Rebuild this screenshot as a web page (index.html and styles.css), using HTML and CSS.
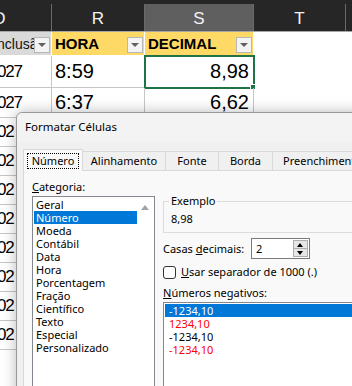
FILE: index.html
```html
<!DOCTYPE html>
<html lang="pt">
<head>
  <meta charset="UTF-8">
  <title>Formatar Células</title>
  <link rel="stylesheet" href="styles.css">
</head>
<body>
  <div class="sheet">
    <div class="heads">
      <div class="head c-d">D</div>
      <div class="head c-r">R</div>
      <div class="head c-s sel">S</div>
      <div class="head c-t">T</div>
      <div class="head c-x"></div>
    </div>

    <div class="row r1">
      <div class="cell c-d gray"><span class="clip">nclusão</span><i class="drop"></i></div>
      <div class="cell c-r yellow"><b>HORA</b><i class="drop"></i></div>
      <div class="cell c-s yellow"><b>DECIMAL</b><i class="drop"></i></div>
    </div>
    <div class="row r2">
      <div class="cell c-d"><span class="year">027</span></div>
      <div class="cell c-r">8:59</div>
      <div class="cell c-s num active">8,98<i class="handle"></i></div>
    </div>
    <div class="row r3">
      <div class="cell c-d"><span class="year">027</span></div>
      <div class="cell c-r">6:37</div>
      <div class="cell c-s num">6,62</div>
    </div>
    <div class="row"><div class="cell c-d"><span class="year">02</span></div></div>
    <div class="row"><div class="cell c-d"><span class="year">02</span></div></div>
    <div class="row"><div class="cell c-d"><span class="year">02</span></div></div>
    <div class="row"><div class="cell c-d"><span class="year">02</span></div></div>
    <div class="row"><div class="cell c-d"><span class="year">02</span></div></div>
    <div class="row"><div class="cell c-d"><span class="year">02</span></div></div>
    <div class="row"><div class="cell c-d"><span class="year">02</span></div></div>
    <div class="row"><div class="cell c-d"><span class="year">02</span></div></div>
  </div>

  <div class="dialog">
    <div class="title">Formatar Células</div>

    <div class="tabs">
      <span class="tab current"><span class="focus">Número</span></span>
      <span class="tab t-alin">Alinhamento</span>
      <span class="tab t-fonte">Fonte</span>
      <span class="tab t-borda">Borda</span>
      <span class="tab t-pre">Preenchimento</span>
    </div>

    <div class="panel">
      <div class="left">
        <div class="label"><u>C</u>ategoria:</div>
        <div class="listbox cats">
          <ul>
            <li>Geral</li>
            <li class="current">Número</li>
            <li>Moeda</li>
            <li>Contábil</li>
            <li>Data</li>
            <li>Hora</li>
            <li>Porcentagem</li>
            <li>Fração</li>
            <li>Científico</li>
            <li>Texto</li>
            <li>Especial</li>
            <li>Personalizado</li>
          </ul>
          <div class="scroll"><i class="up"></i></div>
        </div>
      </div>

      <div class="right">
        <fieldset class="sample">
          <legend>Exemplo</legend>
          <div class="value">8,98</div>
        </fieldset>

        <div class="field">
          <span class="label field-label">Casas <u>d</u>ecimais:</span>
          <div class="spin">
            <span class="spin-val">2</span>
            <div class="spin-btns">
              <span class="spin-btn"><i class="tri-up"></i></span>
              <span class="spin-btn"><i class="tri-down"></i></span>
            </div>
          </div>
        </div>

        <div class="check">
          <span class="box"></span>
          <span class="label"><u>U</u>sar separador de 1000 (.)</span>
        </div>

        <div class="label neg-label"><u>N</u>úmeros negativos:</div>
        <div class="listbox negs">
          <ul>
            <li class="current">-1234,10</li>
            <li class="red">1234,10</li>
            <li>-1234,10</li>
            <li class="red">-1234,10</li>
          </ul>
        </div>
      </div>
    </div>
  </div>
</body>
</html>
```

FILE: styles.css
```css
* {
  box-sizing: border-box;
}

body {
  margin: 0;
  width: 352px;
  height: 386px;
  overflow: hidden;
  position: relative;
  background: #fff;
  font-family: "Liberation Sans", Arial, sans-serif;
}

ul,
li {
  margin: 0;
  padding: 0;
  list-style: none;
}

/* planilha */

.heads {
  display: flex;
  height: 32px;
  padding-top: 4px;
  background: #262626;
  border-bottom: 1px solid #a6a6a6;
}

.head {
  display: flex;
  align-items: center;
  justify-content: center;
  padding-top: 2px;
  color: #f4f4f4;
  font-size: 17px;
  border-right: 1px solid #6a6a6a;
}

.head.sel {
  background: #5f5f5f;
}

.c-d {
  width: 104px;
  margin-left: -52px;
  flex: none;
}

.c-r {
  width: 93px;
  flex: none;
}

.c-s {
  width: 109px;
  flex: none;
}

.c-t {
  width: 92px;
  flex: none;
}

.c-x {
  flex: 1;
  border-right: 0;
}

.row {
  display: flex;
  height: 29px;
}

.row.r1 {
  height: 24px;
}

.row.r2 {
  height: 32px;
}

.row.r3 {
  height: 30px;
}

.cell {
  position: relative;
  display: flex;
  align-items: center;
  padding-left: 3px;
  font-size: 20px;
  color: #000;
  white-space: nowrap;
  overflow: hidden;
  border-right: 1px solid #c6c6c6;
  border-bottom: 1px solid #c6c6c6;
}

.row .c-d {
  padding-left: 52px;
}

.year {
  margin-left: -3px;
  font-size: 17px;
  letter-spacing: -1.2px;
}

.cell.gray {
  background: #d9d9d9;
  font-size: 14px;
  color: #111;
  border-right-color: #fff;
  border-bottom-color: #fff;
}

.clip {
  width: 37px;
  overflow: hidden;
  text-indent: -3px;
}

.cell.yellow {
  background: #ffd966;
  font-size: 15px;
  border-right-color: #fff;
  border-bottom-color: #fff;
}

.drop {
  position: absolute;
  right: 1px;
  top: 5px;
  width: 16px;
  height: 16px;
  background: #f3f3f3;
  border: 1px solid #b7b7b7;
}

.drop::after {
  content: "";
  position: absolute;
  left: 3px;
  top: 5px;
  border-left: 4px solid transparent;
  border-right: 4px solid transparent;
  border-top: 4px solid #606060;
}

.cell.num {
  justify-content: flex-end;
  padding-right: 4px;
}

.cell.active {
  overflow: visible;
  outline: 2px solid #217346;
  outline-offset: -1px;
}

.handle {
  position: absolute;
  right: -3px;
  bottom: -3px;
  width: 6px;
  height: 6px;
  background: #217346;
  border: 1px solid #fff;
}

/* janela */

.dialog {
  position: absolute;
  left: 16px;
  top: 112px;
  width: 400px;
  height: 300px;
  background: #f0f0f0;
  border: 1px solid #9a9a9a;
  border-radius: 6px 0 0 0;
  box-shadow: 0 0 14px rgba(0, 0, 0, 0.28);
  font-family: "Noto Sans", "Open Sans", sans-serif;
  font-size: 11px;
  color: #000;
}

.title {
  height: 29px;
  padding-left: 8px;
  line-height: 28px;
  font-size: 11.5px;
  background: #f3f3f3;
  border-radius: 6px 0 0 0;
}

.tabs {
  display: flex;
  align-items: flex-end;
  height: 28px;
  margin-left: 6px;
  padding-top: 7px;
}

.tab {
  height: 19px;
  line-height: 17px;
  text-align: center;
  background: #f0f0f0;
  border: 1px solid #d9d9d9;
  border-bottom: 0;
  margin-left: -1px;
  white-space: nowrap;
}

.tab.current {
  position: relative;
  z-index: 1;
  width: 60px;
  height: 22px;
  margin-left: 0;
  margin-bottom: -1px;
  padding-top: 2px;
  background: #f9f9f9;
}

.focus {
  display: inline-block;
  width: 52px;
  height: 16px;
  line-height: 14px;
  border: 1px dotted #000;
}

.t-alin {
  width: 84px;
}

.t-fonte {
  width: 54px;
}

.t-borda {
  width: 55px;
}

.t-pre {
  width: 90px;
  text-align: left;
  padding-left: 10px;
}

.panel {
  display: flex;
  gap: 8px;
  height: 240px;
  margin-left: 6px;
  padding: 8px 0 0 8px;
  background: #f9f9f9;
  border: 1px solid #d9d9d9;
}

.label {
  line-height: 16px;
}

.left {
  width: 123px;
}

.listbox {
  background: #fff;
  border: 1px solid #828790;
}

.cats {
  display: flex;
  height: 200px;
  margin-top: 1px;
  padding: 1px 0 0 1px;
}

.cats ul {
  flex: 1;
}

.listbox li {
  height: 13px;
  line-height: 13px;
  padding-left: 2px;
  white-space: nowrap;
}

.listbox li.current {
  background: #0078d7;
  color: #fff;
}

.scroll {
  width: 17px;
  position: relative;
}

.up {
  position: absolute;
  left: 4px;
  top: 7px;
  border-left: 4px solid transparent;
  border-right: 4px solid transparent;
  border-bottom: 5px solid #a3a3a3;
}

.right {
  flex: 1;
  padding-top: 15px;
}

.sample {
  height: 39px;
  margin: 0;
  padding: 0 5px;
  border: 1px solid #dcdcdc;
}

.sample legend {
  padding: 0 2px;
  line-height: 14px;
}

.sample .value {
  padding: 4px 0 0 2px;
  line-height: 14px;
}

.field {
  display: flex;
  align-items: center;
  margin-top: 5px;
}

.field-label {
  width: 88px;
}

.spin {
  display: flex;
  width: 59px;
  height: 21px;
  background: #fff;
  border: 1px solid #7a7a7a;
}

.spin-val {
  flex: 1;
  padding-left: 4px;
  line-height: 19px;
}

.spin-btns {
  display: flex;
  flex-direction: column;
  width: 16px;
  padding: 1px 1px 1px 0;
}

.spin-btn {
  position: relative;
  flex: 1;
  background: #e6e6e6;
  border: 1px solid #adadad;
}

.spin-btn + .spin-btn {
  border-top: 0;
}

.tri-up,
.tri-down {
  position: absolute;
  left: 3px;
  top: 2px;
  border-left: 3.5px solid transparent;
  border-right: 3.5px solid transparent;
}

.tri-up {
  border-bottom: 4px solid #000;
}

.tri-down {
  top: 2px;
  border-top: 4px solid #000;
}

.check {
  display: flex;
  align-items: center;
  gap: 5px;
  height: 14px;
  margin-top: 6px;
}

.box {
  width: 13px;
  height: 13px;
  background: #fff;
  border: 1px solid #333;
  border-radius: 3px;
}

.neg-label {
  margin-top: 7px;
  line-height: 14px;
}

.negs {
  height: 120px;
  margin-top: 2px;
  padding: 1px 0 0 1px;
}

.negs li {
  padding-left: 4px;
}

.negs li.red {
  color: #ff0000;
}
```
